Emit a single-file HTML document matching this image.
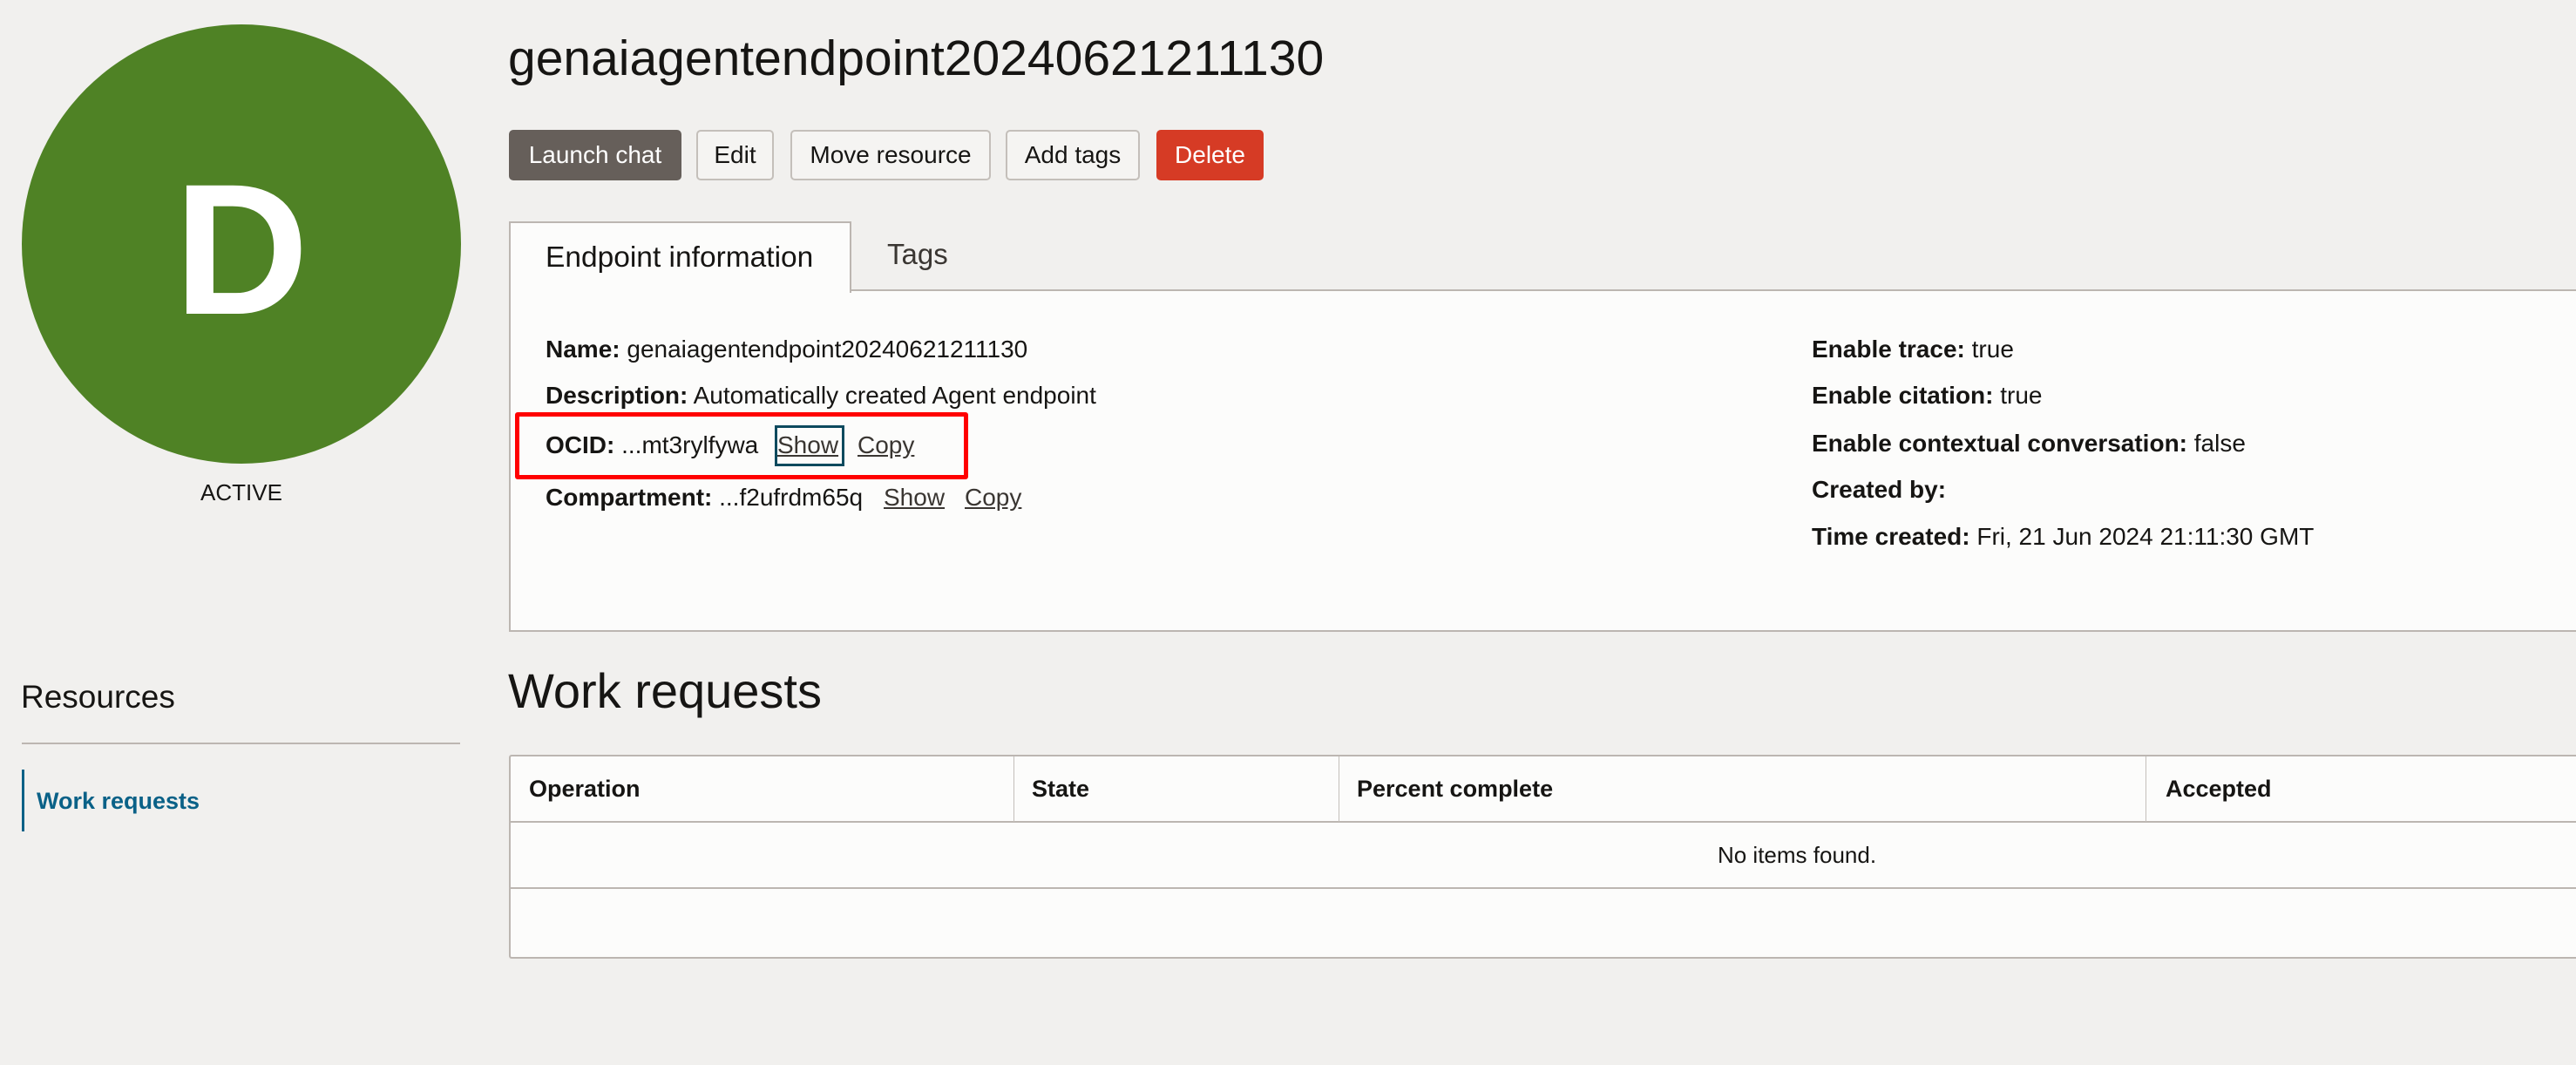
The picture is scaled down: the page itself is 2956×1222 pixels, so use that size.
<!DOCTYPE html>
<html><head><meta charset="utf-8"><style>
*{margin:0;padding:0;box-sizing:border-box}
body{width:2956px;height:1222px;overflow:hidden;background:#f1f0ee;font-family:"Liberation Sans",Arial,sans-serif;color:#161513;position:relative}
.a{position:absolute;white-space:nowrap}
.btn{position:absolute;top:149px;height:58px;border:2px solid #c4bfba;border-radius:5px;background:#f5f4f2;font-size:28px;line-height:54px;text-align:center;color:#161513}
.f{position:absolute;font-size:28px;line-height:30px;white-space:nowrap}
.f b{font-weight:bold}
.u{position:absolute;font-size:28px;line-height:30px;text-decoration:underline;color:#3a3632}
.th{position:absolute;top:867px;height:76px;line-height:76px;font-size:27px;font-weight:bold}
</style></head><body>
<div class="a" style="left:25px;top:28px;width:504px;height:504px;border-radius:50%;background:#4f8225"></div>
<div class="a" style="left:25px;top:162px;width:504px;text-align:center;font-size:214px;font-weight:bold;color:#fff;line-height:250px">D</div>
<div class="a" style="left:25px;top:550px;width:504px;text-align:center;font-size:26px;line-height:30px">ACTIVE</div>

<div class="a" style="left:583px;top:34px;font-size:57px;line-height:66px">genaiagentendpoint20240621211130</div>

<div class="btn" style="left:584px;width:198px;background:#665f5a;border-color:#665f5a;color:#fff">Launch chat</div>
<div class="btn" style="left:799px;width:89px">Edit</div>
<div class="btn" style="left:907px;width:230px">Move resource</div>
<div class="btn" style="left:1154px;width:154px">Add tags</div>
<div class="btn" style="left:1327px;width:123px;background:#d63b25;border-color:#d63b25;color:#fff">Delete</div>

<div class="a" style="left:584px;top:332px;width:2400px;height:393px;background:#fcfcfb;border:2px solid #bcb6b1;border-right:none"></div>
<div class="a" style="left:584px;top:254px;width:393px;height:82px;background:#fcfcfb;border:2px solid #bcb6b1;border-bottom:none"></div>
<div class="a" style="left:626px;top:276px;font-size:33.5px;line-height:40px">Endpoint information</div>
<div class="a" style="left:1018px;top:272px;font-size:33px;line-height:40px;color:#3a3632">Tags</div>

<div class="f" style="left:626px;top:386px"><b>Name:</b> genaiagentendpoint20240621211130</div>
<div class="f" style="left:626px;top:439px"><b>Description:</b> Automatically created Agent endpoint</div>
<div class="f" style="left:626px;top:496px"><b>OCID:</b> ...mt3rylfywa</div>
<span class="u" style="left:892px;top:496px">Show</span>
<span class="u" style="left:984px;top:496px">Copy</span>
<div class="f" style="left:626px;top:556px"><b>Compartment:</b> ...f2ufrdm65q</div>
<span class="u" style="left:1014px;top:556px">Show</span>
<span class="u" style="left:1107px;top:556px">Copy</span>
<div class="a" style="left:591px;top:473px;width:520px;height:77px;border:5px solid #f00;border-radius:3px"></div>
<div class="a" style="left:889px;top:488px;width:80px;height:47px;border:3px solid #0d4a5e"></div>

<div class="f" style="left:2079px;top:386px"><b>Enable trace:</b> true</div>
<div class="f" style="left:2079px;top:439px"><b>Enable citation:</b> true</div>
<div class="f" style="left:2079px;top:494px"><b>Enable contextual conversation:</b> false</div>
<div class="f" style="left:2079px;top:547px"><b>Created by:</b></div>
<div class="f" style="left:2079px;top:601px"><b>Time created:</b> Fri, 21 Jun 2024 21:11:30 GMT</div>

<div class="a" style="left:24px;top:778px;font-size:37px;line-height:44px;color:#161513">Resources</div>
<div class="a" style="left:25px;top:852px;width:503px;height:2px;background:#bcb6b1"></div>
<div class="a" style="left:25px;top:883px;width:3px;height:71px;background:#0a6187"></div>
<div class="a" style="left:42px;top:903px;font-size:27px;line-height:32px;font-weight:bold;color:#0a6187">Work requests</div>

<div class="a" style="left:583px;top:760px;font-size:56px;line-height:66px">Work requests</div>

<div class="a" style="left:584px;top:866px;width:2400px;height:234px;background:#fcfcfb;border:2px solid #bcb6b1;border-right:none;border-radius:3px 0 0 3px"></div>
<div class="a" style="left:584px;top:942px;width:2400px;height:2px;background:#bcb6b1"></div>
<div class="a" style="left:584px;top:1018px;width:2400px;height:2px;background:#bcb6b1"></div>
<div class="a" style="left:1163px;top:868px;width:1px;height:75px;background:#c4bfba"></div>
<div class="a" style="left:1536px;top:868px;width:1px;height:75px;background:#c4bfba"></div>
<div class="a" style="left:2462px;top:868px;width:1px;height:75px;background:#c4bfba"></div>
<div class="th" style="left:607px">Operation</div>
<div class="th" style="left:1184px">State</div>
<div class="th" style="left:1557px">Percent complete</div>
<div class="th" style="left:2485px">Accepted</div>
<div class="a" style="left:1862px;width:400px;top:944px;height:74px;line-height:74px;text-align:center;font-size:26px">No items found.</div>
</body></html>
